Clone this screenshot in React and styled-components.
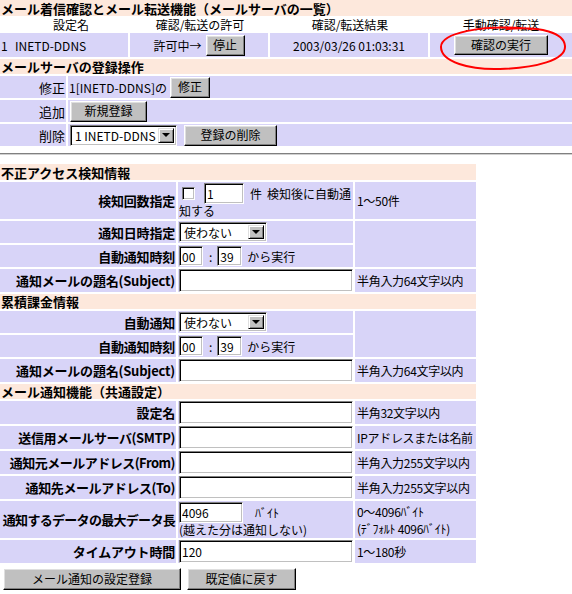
import React from 'react';
import styled, { createGlobalStyle } from 'styled-components';

const LAV = '#d8d4f8';
const PEACH = '#fde8dc';
const FONT = `"Noto Sans CJK JP", "Noto Sans", sans-serif`;

const Global = createGlobalStyle`
  html, body { margin: 0; padding: 0; background: #fff; }
  body { font-family: ${FONT}; font-size: 12px; color: #000; }
  * { box-sizing: border-box; }
`;

const Page = styled.div`
  position: relative;
  width: 572px;
`;

const Section = styled.div`
  display: flex;
  flex-direction: column;
  gap: 2px;
  width: 572px;
`;

const TitleBar = styled.div`
  background: ${PEACH};
  height: ${p => p.h}px;
  display: flex;
  align-items: center;
  line-height: 1;
  font-weight: bold;
  font-size: 13px;
  padding-left: 1px;
  white-space: nowrap;
`;

const HeadRow = styled.div`
  display: grid;
  grid-template-columns: 130px 140px 160px 142px;
  height: 13px;
  line-height: 13px;
`;

const HeadCell = styled.div`
  text-align: center;
  padding-left: ${p => p.pl || 0}px;
  white-space: nowrap;
`;

const GridRow = styled.div`
  display: grid;
  grid-template-columns: ${p => p.cols};
  column-gap: 2px;
  height: ${p => p.h}px;
`;

const Cell = styled.div`
  background: ${LAV};
  display: flex;
  align-items: center;
  justify-content: ${p => p.justify || 'flex-start'};
  gap: ${p => p.gap || 0}px;
  padding: 0 ${p => p.pr || 0}px 0 ${p => p.pl || 0}px;
  font-size: ${p => p.fs || 12}px;
  white-space: nowrap;
`;

const Num = styled.span`
  width: 14px;
`;

const Button = styled.button`
  font-family: ${FONT};
  font-size: 12px;
  color: #000;
  width: ${p => p.w}px;
  height: ${p => p.h || 21}px;
  padding: 0;
  margin: 0;
  background: #c0c0c0;
  border: 1px solid;
  border-color: #fff #000 #000 #fff;
  box-shadow: inset -1px -1px #808080, inset 1px 1px #dfdfdf;
  line-height: 1;
  flex: none;
`;

const SelectBox = styled.div`
  display: inline-flex;
  flex: none;
  width: ${p => p.w}px;
  height: ${p => p.h || 20}px;
  background: #fff;
  border: 1px solid;
  border-color: #808080 #fff #fff #808080;
  box-shadow: inset 1px 1px #000, inset -1px -1px #c0c0c0;
  padding: 2px;
  align-items: stretch;
`;

const SelectText = styled.span`
  flex: 1;
  padding-left: 2px;
  display: flex;
  align-items: center;
  font-size: 12px;
  white-space: nowrap;
`;

const SelectArrow = styled.span`
  width: 16px;
  background: #c0c0c0;
  border: 1px solid;
  border-color: #dfdfdf #000 #000 #dfdfdf;
  box-shadow: inset 1px 1px #fff, inset -1px -1px #808080;
  display: flex;
  align-items: center;
  justify-content: center;
  &::after {
    content: '';
    border-left: 4px solid transparent;
    border-right: 4px solid transparent;
    border-top: 4px solid #000;
  }
`;

const TextInput = styled.input`
  font-family: ${FONT};
  font-size: 12px;
  color: #000;
  width: ${p => p.w}px;
  height: ${p => p.h || 21}px;
  margin: 0 0 0 ${p => p.ml || 0}px;
  padding: 0 2px;
  background: #fff;
  border: 1px solid;
  border-color: #808080 #fff #fff #808080;
  box-shadow: inset 1px 1px #000, inset -1px -1px #c0c0c0;
  outline: none;
  flex: none;
`;

const Check = styled.span`
  display: inline-block;
  flex: none;
  width: 13px;
  height: 13px;
  margin-left: ${p => p.ml || 0}px;
  background: #fff;
  border: 1px solid;
  border-color: #808080 #fff #fff #808080;
  box-shadow: inset 1px 1px #000, inset -1px -1px #c0c0c0;
`;

const Rule = styled.div`
  margin: 7px 0 9px;
  height: 2px;
  border-top: 1px solid #808080;
  border-bottom: 1px solid #d0d0d0;
`;

const Form = styled.div`
  display: grid;
  grid-template-columns: 176px 175px 121px;
  gap: 2px;
  width: 476px;
`;

const FormHead = styled.div`
  grid-column: 1 / -1;
  background: ${PEACH};
  height: ${p => p.h}px;
  display: flex;
  align-items: center;
  line-height: 1;
  font-weight: bold;
  font-size: 13px;
  padding-left: 1px;
  white-space: nowrap;
`;

const Label = styled.div`
  background: ${LAV};
  height: ${p => p.h}px;
  display: flex;
  align-items: center;
  justify-content: flex-end;
  padding-right: 1px;
  font-weight: bold;
  font-size: 13px;
  line-height: 1;
  letter-spacing: ${p => p.ls || -0.2}px;
  white-space: nowrap;
`;

const Content = styled.div`
  background: ${LAV};
  display: flex;
  flex-direction: ${p => (p.stack ? 'column' : 'row')};
  justify-content: ${p => (p.stack ? 'center' : 'flex-start')};
  align-items: ${p => (p.stack ? 'flex-start' : 'center')};
  padding-left: 1px;
  white-space: nowrap;
`;

const Line = styled.div`
  display: flex;
  align-items: center;
  line-height: 14px;
`;

const Gap = styled.span`
  margin-left: ${p => p.ml}px;
`;

const Note = styled.div`
  background: ${LAV};
  grid-row: span ${p => p.rows || 1};
  display: flex;
  flex-direction: column;
  justify-content: center;
  padding-left: 2px;
  line-height: 17px;
  letter-spacing: -0.3px;
  white-space: nowrap;
`;

const NoteLine = styled.div`
  line-height: 17px;
`;

const Actions = styled.div`
  display: flex;
  gap: 6px;
  padding-left: 3px;
  margin-top: 5px;
`;

const Circle = styled.svg`
  position: absolute;
  left: 0;
  top: 0;
  pointer-events: none;
`;

function Select({ w, h, children }) {
  return (
    <SelectBox w={w} h={h}>
      <SelectText>{children}</SelectText>
      <SelectArrow />
    </SelectBox>
  );
}

function TimeFields() {
  return (
    <>
      <TextInput w={24} h={20} defaultValue="00" readOnly />
      <Gap ml={6}>:</Gap>
      <TextInput w={25} h={20} ml={5} defaultValue="39" readOnly />
      <Gap ml={5}>から実行</Gap>
    </>
  );
}

export default function App() {
  return (
    <Page>
      <Global />
      <Section>
        <TitleBar h={16}>メール着信確認とメール転送機能（メールサーバの一覧）</TitleBar>
        <HeadRow>
          <HeadCell pl={12}>設定名</HeadCell>
          <HeadCell>確認/転送の許可</HeadCell>
          <HeadCell>確認/転送結果</HeadCell>
          <HeadCell>手動確認/転送</HeadCell>
        </HeadRow>
        <GridRow cols="128px 138px 158px 142px" h={24}>
          <Cell pl={1}>
            <Num>1</Num>INETD-DDNS
          </Cell>
          <Cell justify="center" gap={4}>
            許可中→<Button w={39}>停止</Button>
          </Cell>
          <Cell justify="center">2003/03/26 01:03:31</Cell>
          <Cell justify="center">
            <Button w={94} h={20}>確認の実行</Button>
          </Cell>
        </GridRow>
        <TitleBar h={15}>メールサーバの登録操作</TitleBar>
        <GridRow cols="66px 1fr" h={22}>
          <Cell justify="flex-end" pr={1} fs={13}>修正</Cell>
          <Cell pl={1} gap={3}>
            1[INETD-DDNS]の<Button w={40}>修正</Button>
          </Cell>
        </GridRow>
        <GridRow cols="66px 1fr" h={22}>
          <Cell justify="flex-end" pr={1} fs={13}>追加</Cell>
          <Cell pl={2}>
            <Button w={77}>新規登録</Button>
          </Cell>
        </GridRow>
        <GridRow cols="66px 1fr" h={22}>
          <Cell justify="flex-end" pr={1} fs={13}>削除</Cell>
          <Cell pl={2} gap={7}>
            <Select w={107} h={21}>1 INETD-DDNS</Select>
            <Button w={93}>登録の削除</Button>
          </Cell>
        </GridRow>
      </Section>

      <Rule />

      <Form>
        <FormHead h={16}>不正アクセス検知情報</FormHead>
        <Label h={37}>検知回数指定</Label>
        <Content stack>
          <Line>
            <Check ml={3} />
            <TextInput w={40} h={21} ml={9} defaultValue="1" readOnly />
            <Gap ml={6}>件</Gap>
            <Gap ml={5}>検知後に自動通</Gap>
          </Line>
          <Line>知する</Line>
        </Content>
        <Note>1～50件</Note>

        <Label h={22}>通知日時指定</Label>
        <Content>
          <Select w={88}>使わない</Select>
        </Content>
        <Note rows={2} />
        <Label h={22}>自動通知時刻</Label>
        <Content>
          <TimeFields />
        </Content>

        <Label h={23}>通知メールの題名(Subject)</Label>
        <Content>
          <TextInput w={174} h={23} readOnly />
        </Content>
        <Note>半角入力64文字以内</Note>

        <FormHead h={15}>累積課金情報</FormHead>
        <Label h={22}>自動通知</Label>
        <Content>
          <Select w={88}>使わない</Select>
        </Content>
        <Note rows={2} />
        <Label h={22}>自動通知時刻</Label>
        <Content>
          <TimeFields />
        </Content>

        <Label h={23}>通知メールの題名(Subject)</Label>
        <Content>
          <TextInput w={174} h={23} readOnly />
        </Content>
        <Note>半角入力64文字以内</Note>

        <FormHead h={15}>メール通知機能（共通設定）</FormHead>
        <Label h={23}>設定名</Label>
        <Content>
          <TextInput w={174} h={23} readOnly />
        </Content>
        <Note>半角32文字以内</Note>

        <Label h={23} ls={-0.4}>送信用メールサーバ(SMTP)</Label>
        <Content>
          <TextInput w={174} h={23} readOnly />
        </Content>
        <Note>IPアドレスまたは名前</Note>

        <Label h={23} ls={-0.5}>通知元メールアドレス(From)</Label>
        <Content>
          <TextInput w={174} h={23} readOnly />
        </Content>
        <Note>半角入力255文字以内</Note>

        <Label h={23} ls={-0.4}>通知先メールアドレス(To)</Label>
        <Content>
          <TextInput w={174} h={23} readOnly />
        </Content>
        <Note>半角入力255文字以内</Note>

        <Label h={37} ls={-0.7}>通知するデータの最大データ長</Label>
        <Content stack>
          <Line>
            <TextInput w={64} h={21} defaultValue="4096" readOnly />
            <Gap ml={12}>ﾊﾞｲﾄ</Gap>
          </Line>
          <Line>(越えた分は通知しない)</Line>
        </Content>
        <Note>
          <NoteLine>0～4096ﾊﾞｲﾄ</NoteLine>
          <NoteLine>(ﾃﾞﾌｫﾙﾄ 4096ﾊﾞｲﾄ)</NoteLine>
        </Note>

        <Label h={23}>タイムアウト時間</Label>
        <Content>
          <TextInput w={174} h={23} defaultValue="120" readOnly />
        </Content>
        <Note>1～180秒</Note>
      </Form>

      <Actions>
        <Button w={178} h={22}>メール通知の設定登録</Button>
        <Button w={109} h={22}>既定値に戻す</Button>
      </Actions>

      <Circle width="572" height="80" viewBox="0 0 572 80">
        <path
          d="M 532 29 C 482 24, 441 33, 441 47 C 441 62, 470 70, 500 69 C 536 68, 566 60, 565 46 C 564 33, 542 26, 506 29"
          fill="none"
          stroke="#ff0000"
          strokeWidth="2"
        />
      </Circle>
    </Page>
  );
}
